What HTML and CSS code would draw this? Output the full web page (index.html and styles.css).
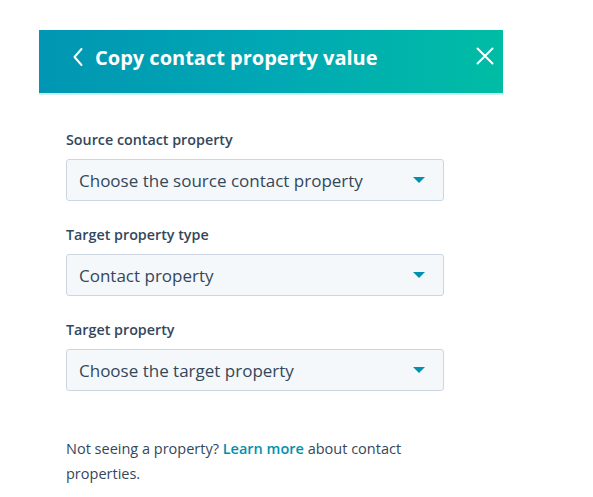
FILE: index.html
```html
<!DOCTYPE html>
<html>
<head>
<meta charset="utf-8">
<link rel="stylesheet" href="styles.css">
</head>
<body>
<div class="panel">
  <div class="header">
    <div class="title-group">
      <svg class="back" width="12" height="20" viewBox="0 0 12 20"><path d="M9.5 2 L2.5 10 L9.5 18" fill="none" stroke="#fff" stroke-width="2" stroke-linecap="round" stroke-linejoin="round"/></svg>
      <h1 class="title">Copy contact property value</h1>
    </div>
    <svg class="close" width="18" height="18" viewBox="0 0 18 18"><path d="M1.5 1.5 L16.5 16.5 M16.5 1.5 L1.5 16.5" fill="none" stroke="#fff" stroke-width="2" stroke-linecap="round"/></svg>
  </div>
  <div class="body">
    <div class="field">
      <label class="label">Source contact property</label>
      <div class="select"><span>Choose the source contact property</span><span class="caret"></span></div>
    </div>
    <div class="field">
      <label class="label">Target property type</label>
      <div class="select"><span>Contact property</span><span class="caret"></span></div>
    </div>
    <div class="field">
      <label class="label">Target property</label>
      <div class="select"><span>Choose the target property</span><span class="caret"></span></div>
    </div>
    <p class="help">Not seeing a property? <a class="link">Learn more</a> about contact properties.</p>
  </div>
</div>
</body>
</html>
```

FILE: styles.css
```css
html, body {
  margin: 0;
  padding: 0;
  background: #fff;
}
body {
  font-family: "Open Sans", "Noto Sans", sans-serif;
  color: #33475b;
}
.panel {
  margin: 30px 0 0 39px;
  width: 464px;
}
.header {
  height: 54px;
  padding: 0 9px 9px 33px;
  background: linear-gradient(90deg, #0096b3 0%, #00a8b4 50%, #00bda5 100%);
  border-bottom: 2px solid #c9f0ec;
  display: flex;
  align-items: center;
  justify-content: space-between;
  box-sizing: content-box;
}
.title-group {
  display: flex;
  align-items: center;
  gap: 11px;
}
.back {
  display: block;
}
.title {
  margin: 0;
  color: #fff;
  font-size: 20px;
  font-weight: 700;
  letter-spacing: 0;
}
.close {
  display: block;
  margin-top: -2px;
}
.body {
  padding: 35px 59px 0 27px;
}
.field {
  margin-bottom: 24px;
}
.label {
  display: block;
  font-size: 14.3px;
  line-height: 20px;
  font-weight: 600;
  margin-bottom: 9px;
}
.select {
  height: 42px;
  box-sizing: border-box;
  border: 1px solid #cbd6e2;
  border-radius: 3px;
  background: #f5f8fa;
  display: flex;
  align-items: center;
  justify-content: space-between;
  padding: 0 18px 0 12px;
  font-size: 17px;
}
.caret {
  width: 0;
  height: 0;
  border-left: 6px solid transparent;
  border-right: 6px solid transparent;
  border-top: 6px solid #0091ae;
}
.help {
  margin: 45px 0 0;
  font-size: 14.5px;
  line-height: 25px;
}
.link {
  color: #0091ae;
  font-weight: 600;
}
```
